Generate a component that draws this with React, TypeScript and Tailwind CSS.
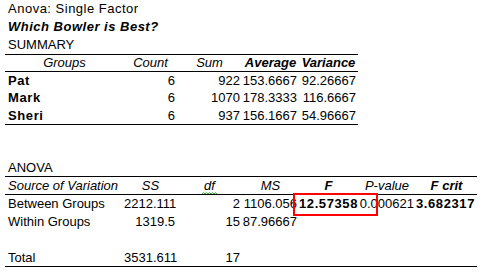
import React from "react";

type Row = {
  cells: string[];
  bold?: number[];
  h: string;
};

const summaryRows: Row[] = [
  { cells: ["Pat", "6", "922", "153.6667", "92.26667"], bold: [0], h: "h-[17px] leading-[17px]" },
  { cells: ["Mark", "6", "1070", "178.3333", "116.6667"], bold: [0], h: "h-[18px] leading-[18px]" },
  { cells: ["Sheri", "6", "937", "156.1667", "54.96667"], bold: [0], h: "h-[17px] leading-[17px]" },
];

const anovaRows: Row[] = [
  {
    cells: ["Between Groups", "2212.111", "2", "1106.056", "12.57358", "0.000621", "3.682317"],
    bold: [4, 6],
    h: "h-[18px] leading-[18px]",
  },
  { cells: ["Within Groups", "1319.5", "15", "87.96667", "", "", ""], h: "h-[18px] leading-[18px]" },
  { cells: ["", "", "", "", "", "", ""], h: "h-[18px] leading-[18px]" },
  { cells: ["Total", "3531.611", "17", "", "", "", ""], h: "h-[17px] leading-[17px]" },
];

const DataRow = ({ row, grid }: { row: Row; grid: string }) => (
  <div className={`grid ${grid} ${row.h}`}>
    {row.cells.map((c, i) => (
      <div
        key={i}
        className={`whitespace-nowrap ${i === 0 ? "pl-[3px] text-left" : "pr-[2px] text-right"} ${
          row.bold?.includes(i) ? "font-bold tracking-[0.6px]" : ""
        }`}
      >
        {c}
      </div>
    ))}
  </div>
);

const SUMMARY_GRID = "grid-cols-[119px_53px_65px_57px_59px]";
const ANOVA_GRID = "grid-cols-[119px_53px_65px_57px_59px_58px_61px]";

export default function App() {
  return (
    <div className="relative w-[488px] h-[274px] bg-white text-black text-[13px] font-['Liberation_Sans',Arial,sans-serif] overflow-hidden">
      <div className="pl-[8px] h-[18px] leading-[18px] tracking-[0.5px]">Anova: Single Factor</div>
      <div className="pl-[8px] h-[18px] leading-[18px] font-bold italic tracking-[0.5px]">Which Bowler is Best?</div>
      <div className="pl-[8px] h-[18px] leading-[18px]">SUMMARY</div>

      {/* summary table */}
      <div className="ml-[5px] w-[353px]">
        <div className={`grid ${SUMMARY_GRID} h-[18px] leading-[16px] border-t border-b border-black italic`}>
          <div className="text-center">Groups</div>
          <div className="text-center">Count</div>
          <div className="text-center">Sum</div>
          <div className="text-center font-bold">Average</div>
          <div className="text-center font-bold">Variance</div>
        </div>
        <div className="border-b border-black">
          {summaryRows.map((r, i) => (
            <DataRow key={i} row={r} grid={SUMMARY_GRID} />
          ))}
        </div>
      </div>

      <div className="h-[35px]" />
      <div className="pl-[8px] h-[16px] leading-[16px]">ANOVA</div>

      {/* anova table */}
      <div className="ml-[5px] w-[472px]">
        <div className={`grid ${ANOVA_GRID} h-[19px] leading-[17px] border-t border-b border-black italic`}>
          <div className="pl-[3px]">Source of Variation</div>
          <div className="text-center">SS</div>
          <div className="text-center">
            <span className="relative">
              df
              <svg className="absolute left-[-2px] top-[14px]" width="15" height="3" viewBox="0 0 15 3">
                <polyline points="0,2 1.5,0.5 3,2 4.5,0.5 6,2 7.5,0.5 9,2 10.5,0.5 12,2 13.5,0.5 15,2" fill="none" stroke="#3fae3f" strokeWidth="1" />
              </svg>
            </span>
          </div>
          <div className="text-center">MS</div>
          <div className="text-center font-bold">F</div>
          <div className="text-center">P-value</div>
          <div className="text-center font-bold">F crit</div>
        </div>
        <div className="border-b border-black">
          {anovaRows.map((r, i) => (
            <DataRow key={i} row={r} grid={ANOVA_GRID} />
          ))}
        </div>
      </div>

      {/* highlight around F value */}
      <div className="absolute left-[293px] top-[193px] w-[85px] h-[23px] border-2 border-[#ff0000]" />
    </div>
  );
}
